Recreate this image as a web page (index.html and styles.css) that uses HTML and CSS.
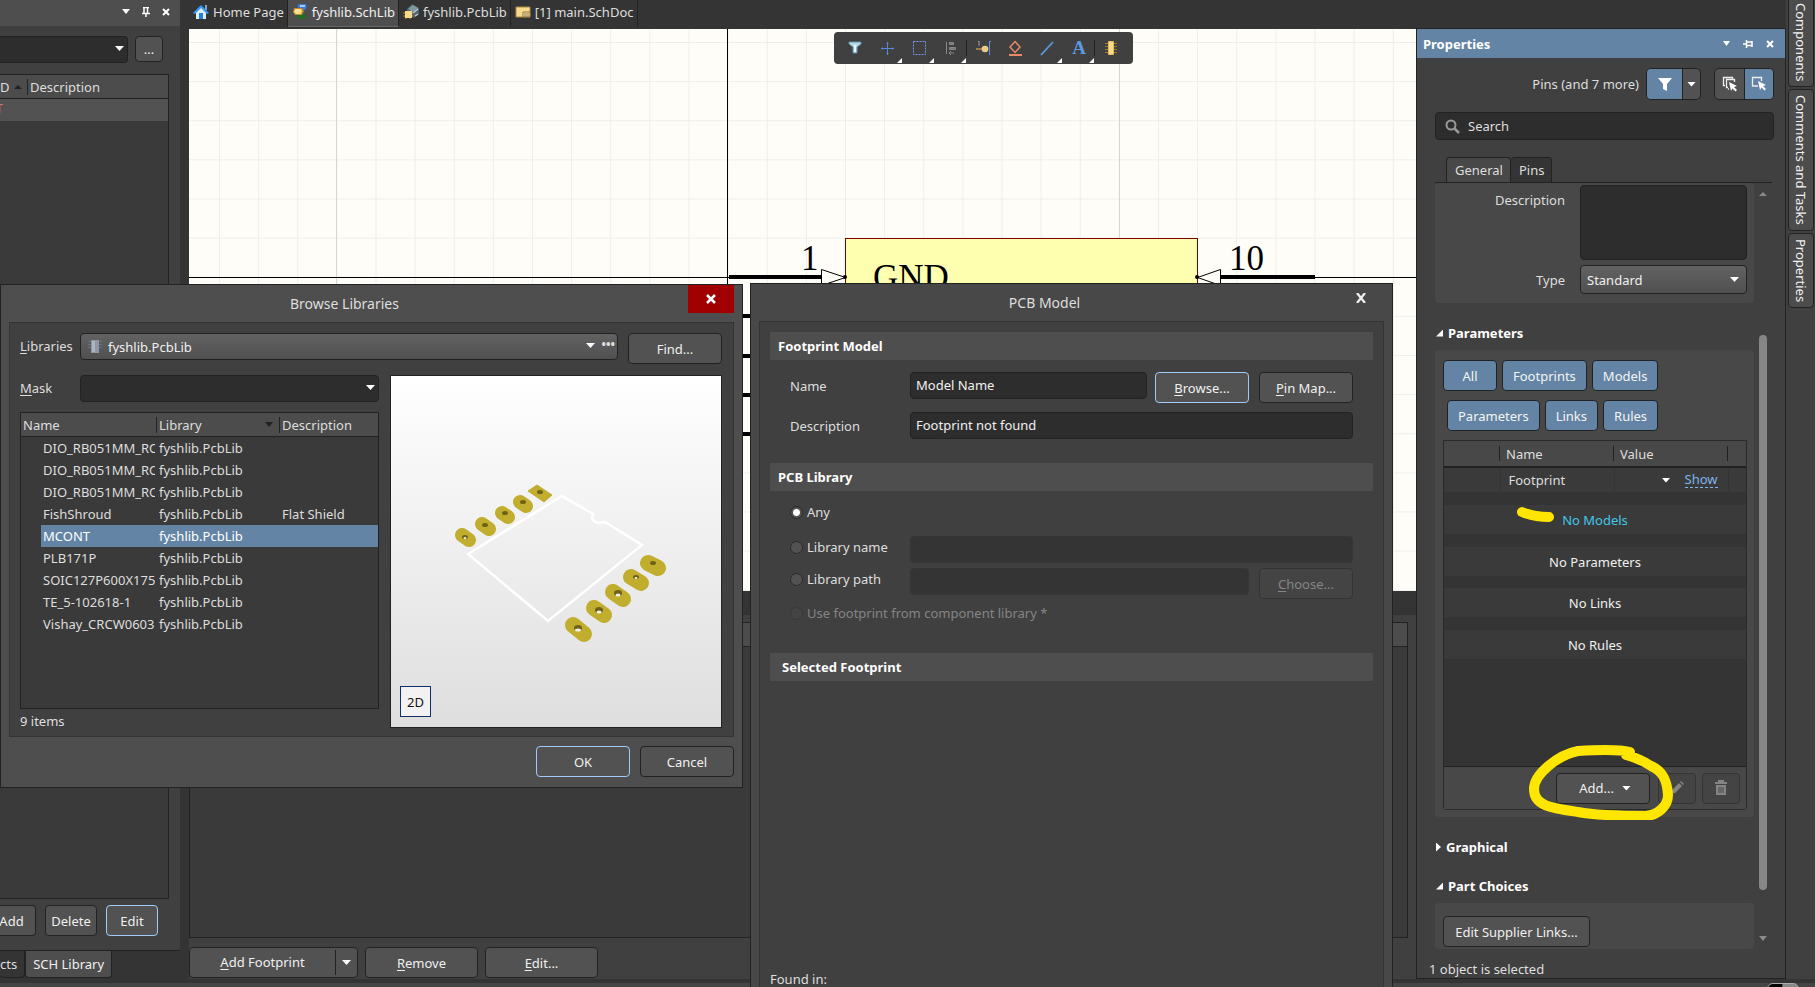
FILE: index.html
```html
<!DOCTYPE html>
<html lang="en">
<head>
<meta charset="utf-8">
<title>fyshlib.SchLib</title>
<link rel="stylesheet" href="styles.css">
</head>
<body>
<div class="app">
  <div class="workspace">
    <aside class="left">
      <header class="left-head">
        <svg class="ico-down" width="8" height="5" viewBox="0 0 8 5"><path d="M0 0h8L4 5z" fill="#fff"/></svg>
        <svg width="8" height="10" viewBox="0 0 8 10"><path d="M1 .5h6M2 0v6M5.500 0v6M0 6.500h8M4 7v3" stroke="#fff" stroke-width="1.500" fill="none"/></svg>
        <svg width="8" height="8" viewBox="0 0 8 8"><path d="M1 1l6 6M7 1L1 7" stroke="#fff" stroke-width="2"/></svg>
      </header>
      <div class="left-body">
        <div class="left-pick">
          <span class="combo dark left-combo"><select aria-label="Component filter"><option></option></select></span>
          <button class="btn more">...</button>
        </div>
        <div class="left-list">
          <div class="left-cols"><span class="id-col">D<svg width="8" height="4" viewBox="0 0 8 4"><path d="M0 4h8L4 0z" fill="#222"/></svg></span><span class="desc-col">Description</span></div>
          <div class="left-row"><span>T</span></div>
        </div>
        <div class="left-actions">
          <button class="btn cut">Add</button>
          <button class="btn">Delete</button>
          <button class="btn focus">Edit</button>
        </div>
      </div>
      <nav class="left-tabs"><a href="#projects">cts</a><a href="#sch" class="on">SCH Library</a></nav>
    </aside>

    <main class="center">
      <nav class="doc-tabs">
        <a href="#home"><svg width="16" height="16" viewBox="0 0 16 16"><path d="M12 1h2v5h-2z" fill="#7ea6c8"/><path d="M3 7l5-5 5 5v8H3z" fill="#e4ecf4"/><path d="M0 9L8 1l8 8-2 1-6-6-6 6z" fill="#3399ff"/><path d="M6 9h4v6H6z" fill="#1e7fe6"/></svg>Home Page</a>
        <a href="#schlib" class="on"><svg width="16" height="16" viewBox="0 0 16 16"><path d="M7 0h7l1 3-2 3H8L5 2z" fill="#3f78d0"/><path d="M8 1h5v2H8z" fill="#a8ccf8"/><path d="M5 10h8l1 3-3 2H6z" fill="#1f6f22"/><path d="M2 4h8l2 3-2 4H3L1 8z" fill="#c08a30"/><path d="M3 5h6l1 2-1 3H4L2 8z" fill="#ffe08a"/></svg>fyshlib.SchLib</a>
        <a href="#pcblib"><svg width="16" height="16" viewBox="0 0 16 16"><path d="M4 5l5-5 7 4v6l-5 4-7-4z" fill="#52636c"/><path d="M5 5l5-4 5 3-5 4z" fill="#7d97a3"/><path d="M10 9l5-4M12 12l3-2" stroke="#b6cbd4" stroke-width="1.500"/><path d="M0 9h10M0 12h10M3 15V7M7 15V7" stroke="#b08a3a"/><path d="M2 7h7v7H2z" fill="#f6d98a"/></svg>fyshlib.PcbLib</a>
        <a href="#main"><svg width="16" height="16" viewBox="0 0 16 16"><path d="M1 3h14v10H1z" fill="#f8da8c" stroke="#a88940"/><path d="M8 8h7v5H8z" fill="#fff0c0" stroke="#8a6f30"/><path d="M9 10h5M9 12h5" stroke="#8a6f30"/></svg>[1] main.SchDoc</a>
      </nav>
      <section class="canvas">
        <svg class="sheet" width="100%" height="100%">
          <defs>
            <pattern id="grid" x="30" y="13" width="39.125" height="39.125" patternUnits="userSpaceOnUse"><path d="M0 .5H40M.5 0V40" stroke="#eeeeec" fill="none"/></pattern>
          </defs>
          <rect width="100%" height="100%" fill="url(#grid)"/>
          <path d="M147.500 0v562M930.500 0v562" stroke="#d6d6d3"/>
          <path d="M0 248.500H1300M538.500 0v562" stroke="#000"/>
          <rect x="656.500" y="209.500" width="352" height="380" fill="#ffffb0" stroke="#800000"/>
          <path d="M540 248h93M540 287h93M540 327h93M540 366h93M540 405h93M1032 248h94" stroke="#000" stroke-width="4"/>
          <path d="M632.500 240.500v16l24-8zM1031.500 240.500v16l-23-8z" fill="#fffdf8" stroke="#000"/>
          <circle cx="656" cy="248" r="2"/><circle cx="1008" cy="248" r="2"/>
          <g class="pin-text"><text x="612" y="241">1</text><text x="1040" y="241">10</text><text x="684" y="260">GND</text></g>
        </svg>
        <div class="toolbar">
          <button aria-label="Filter"><svg width="16" height="16" viewBox="0 0 16 16"><path d="M2 2h12v2l-4 3v6H6V7L2 4z" fill="#b9dbe6" stroke="#5f93a8"/><path d="M7 5h2v7H7z" fill="#e8f6fa"/></svg></button>
          <button class="sub" aria-label="Move"><svg width="16" height="16" viewBox="0 0 16 16"><path d="M8.500 2v13M2 8.500h13" stroke="#5b84dd" fill="none"/><path d="M7.500 3.500h2M7.500 13.500h2M3.500 7.500v2M13.500 7.500v2" stroke="#5b84dd" fill="none"/></svg></button>
          <button class="sub" aria-label="Select"><svg width="16" height="16" viewBox="0 0 16 16"><rect x="2.500" y="1.500" width="12" height="13" fill="none" stroke="#7495ee" stroke-dasharray="2 1"/></svg></button>
          <button class="sub line" aria-label="Align"><svg width="16" height="16" viewBox="0 0 16 16"><path d="M3.500 2v12" stroke="#888"/><path d="M6.500 2.500h4v2h-4zM6.500 7.500h6v2h-6z" fill="#777" stroke="#888"/><path d="M11 13H6m2-2l-2 2 2 2" stroke="#888" fill="none"/></svg></button>
          <button aria-label="Pin"><svg width="16" height="16" viewBox="0 0 16 16"><path d="M14.500 15V1.500h2" stroke="#5d8fdc" fill="none"/><path d="M1 9h8" stroke="#b89048" stroke-width="1.500"/><circle cx="10" cy="9" r="3.300" fill="#efc98c"/><path d="M3 2l1-1v5" stroke="#999" fill="none"/></svg></button>
          <button aria-label="IEEE symbol"><svg width="16" height="16" viewBox="0 0 16 16"><path d="M8 1.500l5 5.500-5 5.500L3 7z" fill="none" stroke="#ea8a66" stroke-width="1.500"/><path d="M2 15h13" stroke="#ea8a66" stroke-width="2"/></svg></button>
          <button class="sub" aria-label="Line"><svg width="16" height="16" viewBox="0 0 16 16"><path d="M2 15L14 2" stroke="#5b9ae0" stroke-width="1.800"/></svg></button>
          <button class="sub line glyph" aria-label="Text">A</button>
          <button aria-label="Part"><svg width="16" height="16" viewBox="0 0 16 16"><path d="M2 3.500h12M2 6.500h12M2 9.500h12M2 12.500h12" stroke="#9a7d33"/><path d="M5.500 1.500h5v13h-5z" fill="#ffd98a" stroke="#e0b860"/></svg></button>
        </div>
      </section>
      <section class="models">
        <div class="models-list"><div class="models-head"></div></div>
        <div class="models-actions">
          <button class="btn split"><span><u>A</u>dd Footprint</span><i></i></button>
          <button class="btn"><span><u>R</u>emove</span></button>
          <button class="btn"><span><u>E</u>dit...</span></button>
        </div>
      </section>
    </main>

    <aside class="props">
      <header class="props-head"><h2>Properties</h2>
        <svg width="7" height="5" viewBox="0 0 7 5"><path d="M0 0h7L3.500 5z" fill="#fff"/></svg>
        <svg width="10" height="8" viewBox="0 0 10 8"><path d="M9 1v6M4 2h5M4 5.500h5M3.500 0v8M0 4h3" stroke="#fff" stroke-width="1.500" fill="none"/></svg>
        <svg width="8" height="8" viewBox="0 0 8 8"><path d="M1 1l6 6M7 1L1 7" stroke="#fff" stroke-width="2"/></svg>
      </header>
      <div class="props-body">
        <div class="scope">
          <span>Pins (and 7 more)</span>
          <div class="group"><button class="blue wide" aria-label="Filter"><svg width="14" height="13" viewBox="0 0 14 13"><path d="M0 0h14L9 6v7L5 11V6z" fill="#fff"/></svg></button><button class="drop" aria-label="Filter options"></button></div>
          <div class="group"><button aria-label="Select all"><svg width="16" height="16" viewBox="0 0 16 16"><path d="M3 9.500H1.500v-8h9V3M6 11.500H4.500V3.500h8V6M7 13H6" fill="none" stroke="#eee" stroke-width="1.300"/><path d="M7 6l8 4-3 1 3 3-1.500 1.500-3-3L9 15z" fill="#fff"/></svg></button><button class="blue" aria-label="Select one"><svg width="16" height="16" viewBox="0 0 16 16"><path d="M7 10H1.500V1.500h9V5" fill="none" stroke="#eee" stroke-width="1.300"/><path d="M7 5l8 4-3 1 3 3-1.500 1.500-3-3L9 14z" fill="#fff"/></svg></button></div>
        </div>
        <div class="search"><svg width="15" height="15" viewBox="0 0 15 15"><circle cx="6" cy="6" r="4.500" fill="none" stroke="#999" stroke-width="2"/><path d="M9 9l5 5" stroke="#999" stroke-width="2.500"/></svg><input type="text" placeholder="Search" aria-label="Search"></div>
        <nav class="props-tabs"><a href="#general" class="on">General</a><a href="#pins">Pins</a></nav>
        <div class="scroll">
          <div class="scroll-main">
            <div class="box fields">
              <label for="desc">Description</label><textarea id="desc"></textarea>
              <label for="type" class="mid">Type</label><span class="combo light"><select id="type"><option>Standard</option></select></span>
            </div>
            <h3 class="open">Parameters</h3>
            <div class="box params">
              <div class="chips"><button class="w54">All</button><button>Footprints</button><button>Models</button></div>
              <div class="chips second"><button>Parameters</button><button>Links</button><button>Rules</button></div>
              <div class="ptable">
                <table>
                  <thead><tr><th class="c0"></th><th class="c1">Name</th><th class="c2">Value</th><th></th></tr></thead>
                  <tbody>
                    <tr class="fp"><td></td><td>Footprint</td><td><div class="val"><i></i><a href="#show">Show</a></div></td><td></td></tr>
                    <tr class="gap"><td colspan="4"></td></tr>
                    <tr class="msg cyan"><td colspan="4">No Models</td></tr>
                    <tr class="gap"><td colspan="4"></td></tr>
                    <tr class="msg"><td colspan="4">No Parameters</td></tr>
                    <tr class="gap short"><td colspan="4"></td></tr>
                    <tr class="msg"><td colspan="4">No Links</td></tr>
                    <tr class="gap"><td colspan="4"></td></tr>
                    <tr class="msg"><td colspan="4">No Rules</td></tr>
                  </tbody>
                </table>
                <div class="pfoot">
                  <button class="btn add">Add...<i></i></button>
                  <button class="btn icon" disabled aria-label="Edit"><svg width="14" height="14" viewBox="0 0 14 14"><path d="M1 13l1-4 7-7 3 3-7 7zM10 1l1-1 3 3-1 1z" fill="#858585"/></svg></button>
                  <button class="btn icon" disabled aria-label="Delete"><svg width="12" height="16" viewBox="0 0 12 16"><path d="M0 3h12M4 2V1h4v1" stroke="#858585" stroke-width="2" fill="none"/><path d="M1 5h10v10H1z" fill="#858585"/><path d="M4 7v6M6 7v6M8 7v6" stroke="#484848"/></svg></button>
                </div>
              </div>
            </div>
            <h3 class="shut">Graphical</h3>
            <h3 class="open">Part Choices</h3>
            <div class="box supply"><button class="btn">Edit Supplier Links...</button></div>
          </div>
          <div class="bar"><svg width="8" height="4" viewBox="0 0 8 4"><path d="M0 4h8L4 0z" fill="#8a8a8a"/></svg><div class="thumb"></div><svg width="8" height="5" viewBox="0 0 8 5"><path d="M0 0h8L4 5z" fill="#8a8a8a"/></svg></div>
        </div>
        <p class="selected">1 object is selected</p>
      </div>
    </aside>

    <nav class="side"><a href="#components" class="first">Components</a><a href="#comments">Comments and Tasks</a><a href="#properties">Properties</a></nav>
  </div>
  <footer class="status"><span></span></footer>
</div>

<section class="dialog browse">
  <header><h1>Browse Libraries</h1><button class="close red" aria-label="Close"><svg width="10" height="10" viewBox="0 0 10 10"><path d="M1 1l8 8M9 1L1 9" stroke="#fff" stroke-width="2.500"/></svg></button></header>
  <div class="browse-body">
    <div class="lib-row">
      <label for="libs"><u>L</u>ibraries</label>
      <span class="combo light libs"><svg width="14" height="14" viewBox="0 0 14 14"><path d="M0 2.500h14M0 5.500h14M0 8.500h14" stroke="#6c7078"/><rect x="3" y="1" width="8" height="13" fill="#8e98a6"/><path d="M4 2h3v11H4z" fill="#abb4c0"/></svg><select id="libs"><option>fyshlib.PcbLib</option></select><b>•••</b></span>
      <button class="btn find">Find...</button>
    </div>
    <div class="browse-cols">
      <div class="browse-left">
        <div class="mask-row"><label for="mask"><u>M</u>ask</label><span class="combo dark"><select id="mask"><option></option></select></span></div>
        <div class="lib-list">
          <table>
            <colgroup><col class="k0"><col class="k1"><col class="k2"><col></colgroup>
            <thead><tr><th colspan="2">Name</th><th>Library<i></i></th><th>Description</th></tr></thead>
            <tbody>
              <tr><td></td><td>DIO_RB051MM_RO</td><td>fyshlib.PcbLib</td><td></td></tr>
              <tr><td></td><td>DIO_RB051MM_RO</td><td>fyshlib.PcbLib</td><td></td></tr>
              <tr><td></td><td>DIO_RB051MM_RO</td><td>fyshlib.PcbLib</td><td></td></tr>
              <tr><td></td><td>FishShroud</td><td>fyshlib.PcbLib</td><td>Flat Shield</td></tr>
              <tr class="sel"><td></td><td>MCONT</td><td>fyshlib.PcbLib</td><td></td></tr>
              <tr><td></td><td>PLB171P</td><td>fyshlib.PcbLib</td><td></td></tr>
              <tr><td></td><td>SOIC127P600X175</td><td>fyshlib.PcbLib</td><td></td></tr>
              <tr><td></td><td>TE_5-102618-1</td><td>fyshlib.PcbLib</td><td></td></tr>
              <tr><td></td><td>Vishay_CRCW0603</td><td>fyshlib.PcbLib</td><td></td></tr>
            </tbody>
          </table>
        </div>
        <p class="count">9 items</p>
      </div>
      <div class="preview">
        <svg width="330" height="350" viewBox="391 376 330 350">
          <path d="M468 554L562 496 593 514Q590 521 598 523L605 522 642 545 548 621z" fill="none" stroke="#fff" stroke-width="2.500"/>
          <g stroke="#c1ad2e" stroke-linecap="round" stroke-width="14">
            <path d="M462 535l7 5M482 524l7 5M502 513l6 4M520 502l6 4"/>
          </g>
          <path d="M528 491l9-6 15 10-8 7z" fill="#c1ad2e" stroke="#c1ad2e"/>
          <g stroke="#c1ad2e" stroke-linecap="round" stroke-width="16">
            <path d="M648 563l10 5M631 577l10 6M613 592l10 7M594 608l10 7M573 625l11 9"/>
          </g>
          <g fill="#6e6216"><ellipse cx="465" cy="537" rx="3" ry="2"/><ellipse cx="485" cy="525" rx="3" ry="2"/><ellipse cx="505" cy="513" rx="3" ry="2"/><ellipse cx="523" cy="502" rx="3" ry="2"/><ellipse cx="540" cy="492" rx="3" ry="2"/><ellipse cx="653" cy="563" rx="3" ry="2"/><ellipse cx="636" cy="577" rx="3" ry="2"/><ellipse cx="618" cy="593" rx="4" ry="3"/><ellipse cx="599" cy="610" rx="4" ry="3"/><ellipse cx="578" cy="628" rx="4" ry="3"/></g>
          <g fill="#f0f0f0"><ellipse cx="465" cy="538" rx="1.500" ry="1"/><ellipse cx="636" cy="578" rx="1.500" ry="1"/><ellipse cx="618" cy="595" rx="2.500" ry="1.500"/><ellipse cx="599" cy="612" rx="2.500" ry="1.500"/><ellipse cx="578" cy="630" rx="3" ry="1.500"/></g>
        </svg>
        <button class="two-d">2D</button>
      </div>
    </div>
  </div>
  <footer class="browse-foot"><button class="btn focus">OK</button><button class="btn">Cancel</button></footer>
</section>

<section class="dialog model">
  <header><h1>PCB Model</h1><button class="close" aria-label="Close"><svg width="10" height="10" viewBox="0 0 10 10"><path d="M1 0l8 10M9 0L1 10" stroke="#eee" stroke-width="2.300"/></svg></button></header>
  <div class="model-body">
    <h2>Footprint Model</h2>
    <div class="form top-form">
      <label for="mname">Name</label><input id="mname" type="text" value="Model Name">
      <button class="btn focus"><span><u>B</u>rowse...</span></button><button class="btn"><span><u>P</u>in Map...</span></button>
      <label for="mdesc">Description</label><input id="mdesc" class="full" type="text" value="Footprint not found">
    </div>
    <h2>PCB Library</h2>
    <div class="form lib-form">
      <label class="radio full-row any"><input type="radio" name="lib" checked>Any</label>
      <label class="radio"><input type="radio" name="lib">Library name</label><input class="full" type="text" disabled aria-label="Library name">
      <label class="radio"><input type="radio" name="lib">Library path</label><input class="path" type="text" disabled aria-label="Library path"><button class="btn" disabled><span><u>C</u>hoose...</span></button>
      <label class="radio full-row off"><input type="radio" name="lib" disabled>Use footprint from component library *</label>
    </div>
    <h2 class="inset">Selected Footprint</h2>
    <p class="found">Found in:</p>
  </div>
</section>

<svg class="marks" width="400" height="320" viewBox="1415 500 400 320">
  <g fill="none" stroke="#ffe600" stroke-width="10" stroke-linecap="round" stroke-linejoin="round">
    <path d="M1522 512Q1534 517 1549 517"/>
    <path d="M1630 752C1618 749 1595 750 1578 751C1558 755 1534 774 1534 789C1534 806 1551 808 1578 812C1600 816 1624 816 1646 816C1658 815 1668 806 1668 795C1667 778 1661 770 1651 766Q1641 759 1626 755"/>
  </g>
</svg>
</body>
</html>
```

FILE: styles.css
```css
* { box-sizing: border-box; }
html, body { height: 100%; }
body { margin: 0; overflow: hidden; position: relative; background: #404040; color: #dedede; font: 13px/18px "Noto Sans", "Open Sans", sans-serif; }
button, input, select, textarea { font: inherit; color: inherit; margin: 0; }
h1, h2, h3, p { margin: 0; font-size: 13px; line-height: 18px; }
a { color: inherit; text-decoration: none; }
svg { display: block; flex: none; }
u { text-underline-offset: 2px; }

.app { height: 100%; display: flex; flex-direction: column; }
.workspace { flex: 1; min-height: 0; display: flex; background: #343434; }
.status { height: 8px; border-top: 4px solid #343434; background: #444; display: flex; justify-content: flex-end; padding-right: 16px; overflow: hidden; }
.status span { width: 32px; height: 12px; border: 1px solid #aaa; border-radius: 6px; background: linear-gradient(90deg, #000 45%, #888 50%); }

/* Shared controls */
.btn { height: 31px; padding: 0 8px; border: 1px solid #222; border-radius: 4px; background: #525252; color: #f0f0f0; display: flex; align-items: center; justify-content: center; white-space: nowrap; }
.btn.focus { border-color: #9fcbf8; }
.btn:disabled { background: #444; border-color: #343434; color: #858585; }
.combo { position: relative; display: block; }
.combo select { width: 100%; height: 100%; padding: 0 6px; appearance: none; border: 1px solid #222; border-radius: 4px; background: #2d2d2d; outline: 0; }
.combo.light select { background: linear-gradient(#626262, #505050); color: #f0f0f0; }
.combo::after, .drop::after, .split i, .val i, .add i { content: ""; width: 9px; height: 5px; background: #fff; clip-path: polygon(0 0, 100% 0, 50% 100%); }
.combo::after { position: absolute; right: 4px; top: 10px; pointer-events: none; }

/* Library panel */
.left { width: 180px; flex: none; display: flex; flex-direction: column; margin-right: 9px; }
.left-head { height: 26px; background: #4e4e4e; display: flex; align-items: center; justify-content: flex-end; gap: 12px; padding: 0 10px 3px 0; }
.left-body { flex: 1; min-height: 0; background: #404040; display: flex; flex-direction: column; padding: 10px 11px 14px 0; border-bottom: 1px solid #222; }
.left-pick { display: flex; gap: 7px; padding-right: 6px; }
.left-combo { flex: 1; height: 27px; }
.left-combo select { border-left: 0; border-radius: 0 4px 4px 0; }
.more { width: 28px; height: 26px; }
.left-list { flex: 1; margin-top: 11px; border: 1px solid #222; border-left: 0; background: #3a3a3a; }
.left-cols { height: 24px; display: flex; align-items: center; background: #4c4c4c; border-bottom: 1px solid #222; }
.id-col { width: 28px; height: 16px; display: flex; align-items: center; gap: 4px; border-right: 1px solid #222; }
.desc-col { padding-left: 2px; }
.left-row { height: 22px; background: #525252; }
.left-row span { width: 3px; display: flex; justify-content: flex-end; overflow: hidden; color: #e07070; }
.left-actions { display: flex; justify-content: space-between; margin-top: 6px; padding-right: 11px; }
.left-actions .btn { width: 52px; }
.left-actions .cut { width: 36px; border-left: 0; border-radius: 0 4px 4px 0; padding: 0 12px 0 0; }
.left-tabs { display: flex; height: 28px; align-items: flex-start; }
.left-tabs a { height: 27px; padding: 4px 7px; border: 1px solid #222; border-top: 0; border-radius: 0 0 4px 4px; }
.left-tabs a:first-child { padding-left: 0; border-left: 0; }
.left-tabs .on { background: #4e4e4e; color: #f0f0f0; }

/* Documents */
.center { flex: 1; min-width: 0; display: flex; flex-direction: column; }
.doc-tabs { height: 29px; display: flex; align-items: flex-start; }
.doc-tabs a { height: 27px; display: flex; align-items: center; gap: 4px; padding: 0 3px 3px 4px; border-right: 1px solid #222; white-space: nowrap; }
.doc-tabs .on { background: #4e4e4e; border-bottom: 1px solid #666; color: #f0f0f0; }
.canvas { flex: 1; min-height: 0; position: relative; overflow: hidden; background: #fffdf8; }
.sheet { position: absolute; inset: 0; }
.pin-text { font: 35px "Liberation Serif", serif; }
.toolbar { position: absolute; left: 645px; top: 3px; height: 32px; padding: 0 6px 0 5px; display: flex; background: #404040; border-radius: 4px; }
.toolbar button { width: 32px; padding: 0; border: 0; background: none; display: flex; align-items: center; justify-content: center; position: relative; }
.toolbar .glyph { font: bold 19px "Liberation Serif", serif; color: #5b9ae0; }
.toolbar .sub::after { content: ""; position: absolute; right: 1px; bottom: 1px; width: 5px; height: 5px; background: #fff; clip-path: polygon(100% 0, 100% 100%, 0 100%); }
.toolbar .line::before { content: ""; position: absolute; right: 0; top: 8px; width: 1px; height: 16px; background: #222; }
.models { height: 364px; flex: none; margin-top: 24px; padding: 7px 8px 0 0; background: #404040; }
.models-list { height: 316px; border: 1px solid #222; background: #3a3a3a; }
.models-head { height: 24px; border-bottom: 1px solid #222; background: #4c4c4c; }
.models-actions { display: flex; gap: 7px; margin-top: 9px; }
.models-actions .btn { width: 113px; }
.models-actions .split { width: 169px; padding: 0; }
.split i { width: 9px; margin: 0 6px; }
.split span { flex: 1; border-right: 1px solid #222; line-height: 25px; }

/* Properties panel */
.props { width: 370px; flex: none; display: flex; flex-direction: column; margin-top: 28px; border: 1px solid #222; background: #404040; }
.props-head { height: 29px; display: flex; align-items: center; gap: 13px; padding: 0 11px 0 6px; background: #6384a4; color: #fff; }
.props-head h2 { flex: 1; }
.props-body { flex: 1; min-height: 0; display: flex; flex-direction: column; padding: 10px 0 0 18px; }
.scope { display: flex; align-items: center; justify-content: flex-end; gap: 13px; padding-right: 11px; }
.scope span { margin-right: -6px; }
.group { display: flex; height: 32px; border: 1px solid #222; border-radius: 5px; overflow: hidden; background: #525252; }
.group button { width: 29px; padding: 0; border: 0; background: none; display: flex; align-items: center; justify-content: center; }
.group button + button { border-left: 1px solid #222; }
.group .blue { background: #6384a4; }
.group .wide { width: 35px; }
.group .drop { width: 18px; }
.search { height: 28px; margin: 12px 11px 0 0; display: flex; align-items: center; gap: 8px; padding: 0 9px; border: 1px solid #222; border-radius: 4px; background: #2d2d2d; }
.search input { flex: 1; padding: 0; border: 0; background: none; outline: 0; }
.search input::placeholder { color: #dedede; opacity: 1; }
.props-tabs { display: flex; margin: 17px 13px 0 0; padding-left: 11px; border-bottom: 1px solid #222; }
.props-tabs a { height: 25px; padding: 3px 7px 4px 8px; border: 1px solid #222; border-bottom: 0; border-radius: 4px 4px 0 0; background: #343434; }
.props-tabs a + a { border-left: 0; }
.props-tabs .on { background: #484848; }
.scroll { flex: 1; min-height: 0; display: flex; }
.scroll-main { flex: 1; overflow: hidden; }
.bar { width: 31px; display: flex; flex-direction: column; align-items: center; padding: 9px 14px 8px 0; }
.thumb { width: 8px; flex: 1; margin: 139px 0 46px; border-radius: 4px; background: #868686; }
.box { background: #484848; border-radius: 4px; }
.fields { display: grid; grid-template-columns: 130px 167px; column-gap: 15px; row-gap: 5px; padding: 2px 0 9px; }
.fields label { text-align: right; padding-top: 6px; }
.fields textarea { height: 75px; resize: none; border: 1px solid #222; border-radius: 4px; background: #2d2d2d; }
.fields .combo { height: 29px; }
.fields .combo::after { right: 8px; top: 12px; }
h3 { padding: 21px 0 8px 13px; height: 47px; color: #fff; display: flex; align-items: center; position: relative; }
h3.shut { padding: 21px 0 0 11px; height: 39px; }
h3::before { content: ""; position: absolute; left: 1px; width: 7px; height: 7px; background: #fff; clip-path: polygon(100% 0, 100% 100%, 0 100%); }
h3.shut::before { width: 5px; height: 9px; clip-path: polygon(0 0, 100% 50%, 0 100%); }
.params { padding: 10px 7px 7px 8px; }
.chips { display: flex; gap: 5px; margin-bottom: 9px; }
.chips.second { padding-left: 4px; }
.chips button { height: 31px; padding: 0 10px; border: 1px solid #222; border-radius: 4px; background: #6384a4; color: #f4f4f4; }
.chips .w54 { width: 54px; }
.ptable { height: 370px; display: flex; flex-direction: column; justify-content: space-between; border: 1px solid #2a2a2a; border-radius: 0 0 3px 3px; background: #343434; }
.ptable table { width: 100%; border-collapse: collapse; table-layout: fixed; }
.ptable th { height: 26px; padding: 0 6px; text-align: left; font-weight: 400; border-bottom: 2px solid #222; background: linear-gradient(#222, #222) right center / 1px 15px no-repeat #484848; }
.ptable th:last-child { background: #484848; }
.c0 { width: 56px; }
.c1, .c2 { width: 114px; }
.ptable td { padding: 0 8px; background: #3a3a3a; }
.fp td { height: 25px; border-right: 1px solid #343434; }
.fp td:last-child { border: 0; }
.ptable .gap td { height: 13px; background: #343434; }
.ptable .short td { height: 12px; }
.ptable .msg td { height: 29px; text-align: center; color: #f0f0f0; }
.ptable .cyan td { color: #3fc8e8; }
.val { display: flex; align-items: center; justify-content: flex-end; gap: 14px; padding-right: 2px; }
.val a { color: #7fb4ea; line-height: 15px; border-bottom: 1px dashed #7fb4ea; }
.pfoot { height: 43px; display: flex; justify-content: flex-end; align-items: center; gap: 6px; padding-right: 6px; border-top: 1px solid #222; background: #484848; }
.add { width: 94px; gap: 8px; margin-right: 2px; padding-left: 12px; }
.icon { width: 38px; padding: 0; }
.supply { padding: 13px 8px 2px; }
.supply .btn { width: 147px; }
.selected { height: 29px; padding-top: 11px; margin-left: -6px; }

/* Vertical tabs */
.side { width: 29px; flex: none; padding: 0 1px 0 2px; background: #404040; display: flex; flex-direction: column; gap: 2px; }
.side a { width: 26px; padding: 5px 3px; writing-mode: vertical-rl; border: 1px solid #222; border-radius: 4px; background: #4c4c4c; color: #f0f0f0; }
.side .first { padding-top: 3px; border-top: 0; border-radius: 0 0 4px 4px; }

/* Dialogs */
.dialog { position: absolute; border: 1px solid #222; display: flex; flex-direction: column; }
.dialog header { position: relative; height: 37px; display: flex; align-items: center; justify-content: center; padding-right: 54px; }
.dialog h1 { font-size: 14px; font-weight: 400; }
.close { position: absolute; right: 8px; top: 0; width: 46px; height: 28px; padding: 0; border: 0; background: none; display: flex; align-items: center; justify-content: center; }
.close.red { background: #a00000; }
.browse { left: 0; top: 284px; width: 743px; background: #4e4e4e; padding: 0 8px 10px; }
.browse .close { right: 0; }
.browse-body { border: 1px solid #343434; background: #404040; padding: 10px 11px 6px 10px; }
.lib-row { display: flex; align-items: flex-start; }
.lib-row label, .mask-row label { width: 60px; flex: none; padding-top: 4px; }
.libs { flex: 1; height: 27px; }
.libs svg { position: absolute; left: 8px; top: 6px; }
.libs select { padding-left: 27px; }
.libs::after { right: 23px; }
.libs b { position: absolute; right: 3px; top: 3px; font-size: 12px; }
.find { width: 94px; margin-left: 10px; }
.browse-cols { display: flex; gap: 11px; margin-top: 11px; }
.browse-left { width: 359px; flex: none; }
.mask-row { display: flex; }
.mask-row .combo { flex: 1; height: 27px; }
.lib-list { height: 297px; margin-top: 10px; border: 1px solid #222; background: #3a3a3a; }
.lib-list table { width: 100%; table-layout: fixed; border-collapse: separate; border-spacing: 0; }
.k0 { width: 20px; } .k1 { width: 116px; } .k2 { width: 123px; }
.lib-list th { height: 24px; padding: 0 2px; text-align: left; font-weight: 400; position: relative; border-bottom: 1px solid #222; background: linear-gradient(#222, #222) right center / 1px 16px no-repeat #4c4c4c; }
.lib-list th:last-child { background: #4c4c4c; }
.lib-list th i { position: absolute; right: 7px; top: 9px; width: 8px; height: 5px; background: #222; clip-path: polygon(0 0, 100% 0, 50% 100%); }
.lib-list td { height: 22px; padding: 0 0 0 2px; overflow: hidden; white-space: nowrap; }
.lib-list td:nth-child(2) { border-right: 2px solid transparent; }
.sel td { background: #6384a4; color: #fff; }
.sel td:first-child { background: none; }
.count { padding-top: 3px; }
.preview { position: relative; flex: 1; height: 353px; border: 1px solid #222; background: linear-gradient(#fff, #dedede); overflow: hidden; }
.two-d { position: absolute; left: 9px; bottom: 10px; width: 31px; height: 31px; padding: 0; border: 1px solid #10306a; background: #f2f2f2; color: #111; }
.browse-foot { display: flex; justify-content: flex-end; gap: 10px; padding-top: 9px; }
.browse-foot .btn { width: 94px; }

.model { left: 750px; top: 283px; bottom: 0; width: 643px; background: #484848; padding: 0 8px; border-bottom: 0; overflow: hidden; }
.model .close { width: 30px; }
.model .model-head { padding-right: 52px; }
.model-body { flex: 1; border: 1px solid #343434; border-bottom: 0; background: #404040; padding: 10px; display: flex; flex-direction: column; }
.model-body h2 { height: 28px; padding: 5px 8px; background: #4e4e4e; color: #fff; }
.model-body .inset { padding-left: 12px; }
.form { display: grid; grid-template-columns: 120px 1fr 102px 104px; padding: 12px 20px 0; align-items: start; align-content: start; }
.form > input { width: 100%; height: 27px; padding: 0 5px 2px; border: 1px solid #222; border-radius: 4px; background: #2d2d2d; color: #f0f0f0; }
.form > input:disabled { background: #343434; border-color: #363636; }
.form > label { padding-top: 5px; }
.form .btn { width: 94px; justify-self: end; }
.top-form { height: 103px; row-gap: 9px; }
.top-form .full { grid-column: 2 / 5; }
.lib-form { height: 162px; row-gap: 5px; }
.lib-form .full { grid-column: 2 / 5; }
.lib-form .path { grid-column: 2 / 4; }
.lib-form .full-row { grid-column: 1 / 5; }
.form > .radio { display: flex; align-items: center; gap: 4px; padding-top: 2px; }
.form > .any { padding: 0; margin-bottom: 10px; }
.form > .off { padding: 0; color: #858585; }
.radio input { appearance: none; width: 13px; height: 13px; border: 1px solid #2a2a2a; border-radius: 50%; background: #525252; }
.radio input:checked { background: radial-gradient(#fff 0 3px, #525252 4px); }
.radio input:disabled { background: #444; border-color: #383838; }
.found { margin-top: auto; margin-bottom: -11px; }

.marks { position: absolute; right: 0; top: 500px; pointer-events: none; }
```
